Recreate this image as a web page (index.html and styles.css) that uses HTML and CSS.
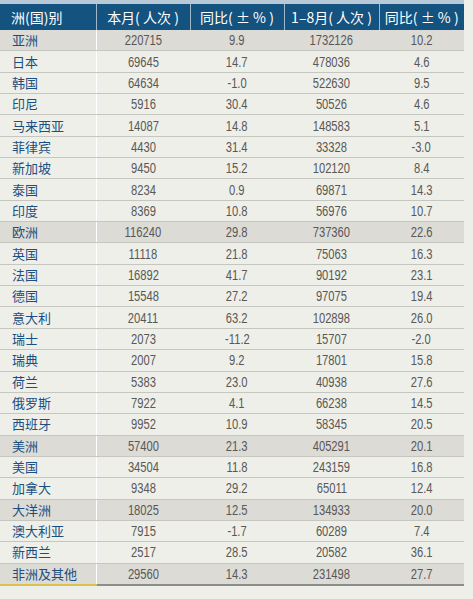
FILE: index.html
```html
<!DOCTYPE html>
<html lang="zh">
<head>
<meta charset="utf-8">
<link rel="stylesheet" href="styles.css">
</head>
<body>
<div class="wrap">
<table class="stats">
<colgroup><col class="c1"><col class="c2"><col class="c3"><col class="c4"><col class="c5"></colgroup>
<thead>
<tr><th class="name">洲(国)别</th><th>本月( 人次 )</th><th>同比( ± % )</th><th>1–8月( 人次 )</th><th>同比( ± % )</th></tr>
</thead>
<tbody>
<tr class="hl"><td class="name">亚洲</td><td><span>220715</span></td><td><span>9.9</span></td><td><span>1732126</span></td><td><span>10.2</span></td></tr>
<tr><td class="name">日本</td><td><span>69645</span></td><td><span>14.7</span></td><td><span>478036</span></td><td><span>4.6</span></td></tr>
<tr><td class="name">韩国</td><td><span>64634</span></td><td><span>-1.0</span></td><td><span>522630</span></td><td><span>9.5</span></td></tr>
<tr><td class="name">印尼</td><td><span>5916</span></td><td><span>30.4</span></td><td><span>50526</span></td><td><span>4.6</span></td></tr>
<tr><td class="name">马来西亚</td><td><span>14087</span></td><td><span>14.8</span></td><td><span>148583</span></td><td><span>5.1</span></td></tr>
<tr><td class="name">菲律宾</td><td><span>4430</span></td><td><span>31.4</span></td><td><span>33328</span></td><td><span>-3.0</span></td></tr>
<tr><td class="name">新加坡</td><td><span>9450</span></td><td><span>15.2</span></td><td><span>102120</span></td><td><span>8.4</span></td></tr>
<tr><td class="name">泰国</td><td><span>8234</span></td><td><span>0.9</span></td><td><span>69871</span></td><td><span>14.3</span></td></tr>
<tr><td class="name">印度</td><td><span>8369</span></td><td><span>10.8</span></td><td><span>56976</span></td><td><span>10.7</span></td></tr>
<tr class="hl"><td class="name">欧洲</td><td><span>116240</span></td><td><span>29.8</span></td><td><span>737360</span></td><td><span>22.6</span></td></tr>
<tr><td class="name">英国</td><td><span>11118</span></td><td><span>21.8</span></td><td><span>75063</span></td><td><span>16.3</span></td></tr>
<tr><td class="name">法国</td><td><span>16892</span></td><td><span>41.7</span></td><td><span>90192</span></td><td><span>23.1</span></td></tr>
<tr><td class="name">德国</td><td><span>15548</span></td><td><span>27.2</span></td><td><span>97075</span></td><td><span>19.4</span></td></tr>
<tr><td class="name">意大利</td><td><span>20411</span></td><td><span>63.2</span></td><td><span>102898</span></td><td><span>26.0</span></td></tr>
<tr><td class="name">瑞士</td><td><span>2073</span></td><td><span>-11.2</span></td><td><span>15707</span></td><td><span>-2.0</span></td></tr>
<tr><td class="name">瑞典</td><td><span>2007</span></td><td><span>9.2</span></td><td><span>17801</span></td><td><span>15.8</span></td></tr>
<tr><td class="name">荷兰</td><td><span>5383</span></td><td><span>23.0</span></td><td><span>40938</span></td><td><span>27.6</span></td></tr>
<tr><td class="name">俄罗斯</td><td><span>7922</span></td><td><span>4.1</span></td><td><span>66238</span></td><td><span>14.5</span></td></tr>
<tr><td class="name">西班牙</td><td><span>9952</span></td><td><span>10.9</span></td><td><span>58345</span></td><td><span>20.5</span></td></tr>
<tr class="hl"><td class="name">美洲</td><td><span>57400</span></td><td><span>21.3</span></td><td><span>405291</span></td><td><span>20.1</span></td></tr>
<tr><td class="name">美国</td><td><span>34504</span></td><td><span>11.8</span></td><td><span>243159</span></td><td><span>16.8</span></td></tr>
<tr><td class="name">加拿大</td><td><span>9348</span></td><td><span>29.2</span></td><td><span>65011</span></td><td><span>12.4</span></td></tr>
<tr class="hl"><td class="name">大洋洲</td><td><span>18025</span></td><td><span>12.5</span></td><td><span>134933</span></td><td><span>20.0</span></td></tr>
<tr><td class="name">澳大利亚</td><td><span>7915</span></td><td><span>-1.7</span></td><td><span>60289</span></td><td><span>7.4</span></td></tr>
<tr><td class="name">新西兰</td><td><span>2517</span></td><td><span>28.5</span></td><td><span>20582</span></td><td><span>36.1</span></td></tr>
<tr class="hl last"><td class="name">非洲及其他</td><td><span>29560</span></td><td><span>14.3</span></td><td><span>231498</span></td><td><span>27.7</span></td></tr>
</tbody>
</table>
</div>
</body>
</html>
```
FILE: styles.css
```css
html, body {
  margin: 0;
  padding: 0;
  background: #efefea;
}
.wrap {
  width: 464px;
  border-top: 4px solid #b7c9d6;
}
.stats {
  width: 464px;
  border-collapse: collapse;
  table-layout: fixed;
}
.c1 { width: 96px; }
.c2 { width: 94px; }
.c3 { width: 94px; }
.c4 { width: 95px; }
.c5 { width: 85px; }
.stats th {
  background: #14527f;
  color: #ffffff;
  font-family: "Noto Sans CJK SC", "Liberation Sans", sans-serif;
  font-weight: normal;
  font-size: 14px;
  height: 26px;
  padding: 0;
  text-align: center;
  border-left: 1px solid #9fb8cc;
  white-space: nowrap;
  line-height: 26px;
}
.stats th.name {
  text-align: left;
  padding-left: 11px;
  border-left: none;
}
.stats td {
  height: 20.35px;
  padding: 0;
  text-align: center;
  font-family: "Liberation Sans", "Arimo", sans-serif;
  font-size: 14px;
  color: #585856;
  border-bottom: 1px solid #c6c6c1;
  line-height: 20px;
}
.stats td span {
  display: inline-block;
  transform: scaleX(0.8);
}
.stats td.name {
  text-align: left;
  padding-left: 12px;
  font-family: "Noto Sans CJK SC", sans-serif;
  font-size: 13px;
  color: #1a4f82;
  border-right: 1px solid #ffffff;
}
.stats tr.hl td {
  background: #dddbd6;
}
.stats tr.last td {
  border-bottom: 2px solid #8d8d8a;
}
.stats tr.last td.name {
  border-bottom-color: #d9c24e;
}
```
